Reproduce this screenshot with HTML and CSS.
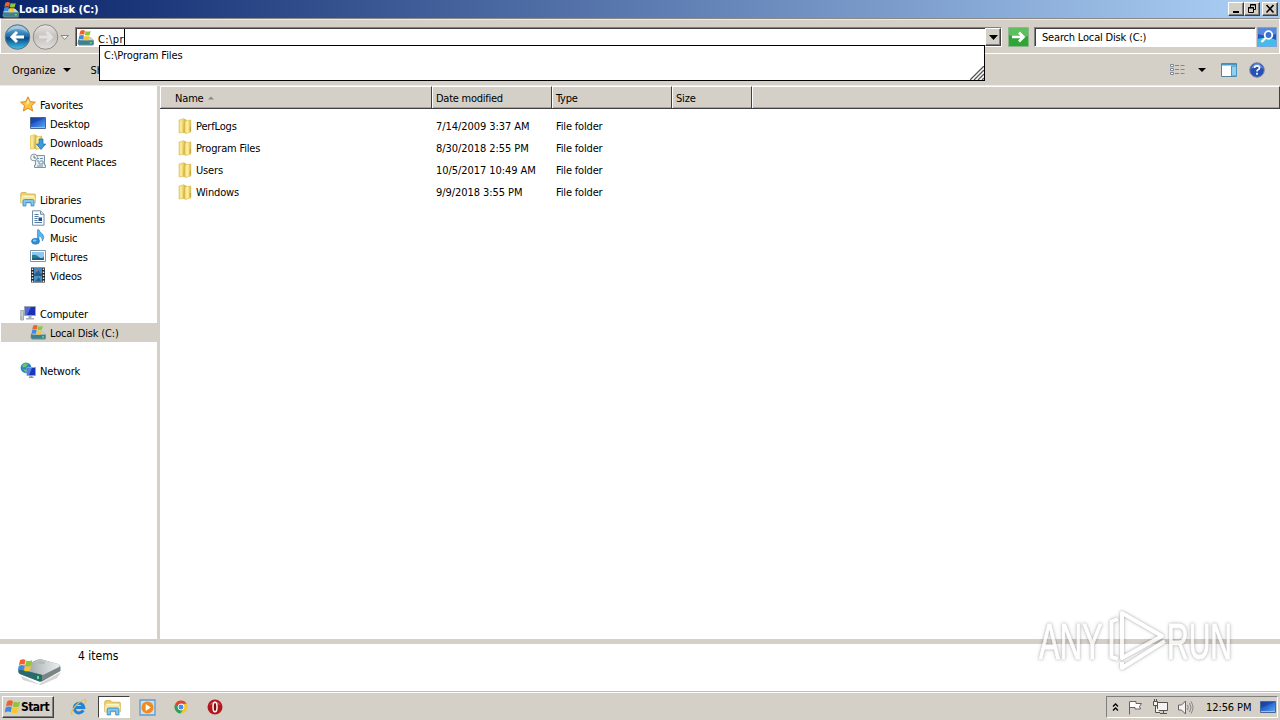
FILE: index.html
```html
<!DOCTYPE html>
<html lang="en">
<head>
<meta charset="utf-8">
<meta name="viewport" content="width=device-width,initial-scale=1">
<title>Local Disk (C:)</title>
<link rel="stylesheet" href="styles.css">
</head>
<body>

<!-- ======= SHARED ICONS ======= -->
<svg class="defs" width="0" height="0">
  <defs>
    <linearGradient id="gFolder" x1="0" x2="1"><stop offset="0" stop-color="#f7e68e"/><stop offset=".5" stop-color="#fff0a0"/><stop offset="1" stop-color="#d4b030"/></linearGradient>
    <linearGradient id="gScreen" x1="0" x2="1" y2="1"><stop offset="0" stop-color="#1747ad"/><stop offset=".5" stop-color="#2f6bd8"/><stop offset="1" stop-color="#5fb2ee"/></linearGradient>
    <linearGradient id="gBack" x2="0" y2="1"><stop offset="0" stop-color="#8fc0dc"/><stop offset=".45" stop-color="#2372ae"/><stop offset=".55" stop-color="#0b4a86"/><stop offset="1" stop-color="#3fc6f0"/></linearGradient>
    <linearGradient id="gGrey" x2="0" y2="1"><stop offset="0" stop-color="#e6e4e1"/><stop offset=".5" stop-color="#c4c1bd"/><stop offset="1" stop-color="#e2e0de"/></linearGradient>
    <linearGradient id="gDrive" x2="1" y2="0"><stop offset="0" stop-color="#8d9596"/><stop offset="1" stop-color="#eef0f0"/></linearGradient>
  </defs>
  <symbol id="flag" viewBox="0 0 12 12">
    <path d="M1.6 1.8Q4 .3 6 1.6L5.2 5.4Q3 4.400 .7 5.700Z" fill="#f0612b"/>
    <path d="M6.600 1.900Q9 3 11.400 1.800L10.500 5.600Q8.200 6.600 5.800 5.600Z" fill="#8cc63f"/>
    <path d="M.6 6.300Q3 5 5.100 6.100L4.300 9.900Q2 8.900-.3 10.200Z" fill="#3b8de0"/>
    <path d="M5.700 6.300Q8 7.400 10.400 6.300L9.500 10.100Q7 11.200 4.900 10.200Z" fill="#fcc62b"/>
  </symbol>
  <symbol id="drive" viewBox="0 0 16 16">
    <path d="M1 10L5 7.500H12.500L15.800 10.500V14.500Q15.800 15.500 14.500 15.500H2L.5 14Z" fill="#6d8e98"/>
    <path d="M1 10L5 7.500H12.500L15.500 10.500H3Z" fill="#c8d3d3"/>
    <path d="M.8 10.700L3 11H15.300V14.500H2Z" fill="#3a8192"/>
    <path d="M12 13h2" stroke="#6fe05a" stroke-width="1.300"/>
    <use href="#flag" x="1.500" y="0" width="12" height="12"/>
  </symbol>
  <symbol id="folder" viewBox="0 0 14 16">
    <path d="M1 2L6 .6V14.500L1 15Z" fill="#f0d871" stroke="#dcc468" stroke-width=".6"/>
    <path d="M6 .8L8.500 1.700V15.400L5 14.600Z" fill="#dcb942"/>
    <path d="M7 3L12.800 2V14L7 15.500Z" fill="url(#gFolder)" stroke="#d8bb58" stroke-width=".6"/>
    <path d="M3 2.500V14" stroke="#fff8cc"/>
    <path d="M12.300 9v4" stroke="#c49e35"/>
  </symbol>
  <symbol id="library" viewBox="0 0 16 16">
    <path d="M.7 3Q.7 1.500 2 1.500H6L7.500 3H14.500Q15.400 3 15.400 4V12H.7Z" fill="#edd06a" stroke="#c9a73d" stroke-width=".7"/>
    <path d="M2 4.500H14.200V9H2Z" fill="#fdf6c8"/>
    <path d="M.8 6H15.300V12.500H.8Z" fill="#f7e699"/>
    <path d="M3 15V10Q3 8.500 4.500 8.500H12.500Q14 8.500 14 10V15H11V11.500H6V15Z" fill="#7fc7ee" stroke="#3389c4" stroke-width=".8"/>
  </symbol>
  <symbol id="screen" viewBox="0 0 16 14">
    <path d="M.5 1.500H15.500V12.500H.5Z" fill="url(#gScreen)" stroke="#4a6794"/>
    <path d="M1 2H15L1 8Z" fill="#0d2f8a" opacity=".4"/>
    <path d="M1 11.500H15" stroke="#8ac6ef"/>
    <path d="M1.500 11.500h2" stroke="#9be257"/>
  </symbol>
</svg>

<!-- ======= TITLE BAR ======= -->
<header class="titlebar">
  <svg class="ico" width="17" height="17"><use href="#drive"/></svg>
  <h1>Local Disk (C:)</h1>
  <div class="win-buttons">
    <button class="raised"><svg width="12" height="10"><path d="M3 8h6" stroke="#000" stroke-width="2"/></svg></button>
    <button class="raised"><svg width="12" height="10" fill="none" stroke="#000"><path d="M4.500 3V.5h5v5H8M4 1h6M2.500 3.500h5v5h-5zM2 4h6"/></svg></button>
    <button class="raised last"><svg width="12" height="10" stroke="#000" stroke-width="1.600"><path d="M2.500 1l7 7.500M9.500 1l-7 7.500"/></svg></button>
  </div>
</header>

<!-- ======= ADDRESS BAR ======= -->
<div class="navbar">
  <svg class="nav-arrows" width="70" height="28" viewBox="0 0 70 28">
    <circle cx="16.500" cy="14" r="12.300" fill="url(#gBack)" stroke="#5c7489"/>
    <path d="M6 10Q16 2 27 10Q25 3 16.500 3Q8 3 6 10Z" fill="#fff" opacity=".35"/>
    <path d="M23 14H11.500M16 9L11 14L16 19" fill="none" stroke="#fff" stroke-width="3"/>
    <circle cx="44.500" cy="14" r="12.300" fill="url(#gGrey)" stroke="#8d8b89"/>
    <path d="M38 14H50M45.500 9L50.500 14L45.500 19" fill="none" stroke="#e4e2e0" stroke-width="3"/>
    <path d="M60 12.500H67.500L63.700 16.500Z" fill="#f5f4f2" stroke="#8b8884"/>
  </svg>
  <div class="address sunken">
    <svg class="ico" width="17" height="17"><use href="#drive"/></svg>
    <span class="typed">C:\pr</span>
    <button class="drop raised"><svg width="9" height="5"><path d="M0 0h9L4.500 5z"/></svg></button>
    <div class="suggest">
      <span>C:\Program Files</span>
      <svg class="grip" width="14" height="14" stroke="#555" stroke-width="1.300"><path d="M0 14L14 0M4 14L14 4M8 14L14 8M12 14l2-2"/></svg>
    </div>
  </div>
  <svg class="go" width="21" height="20" viewBox="0 0 21 20">
    <path d="M.5.5h20v19H.5z" fill="#2fa535" stroke="#8fb690"/>
    <path d="M1 1h19v8Q10 12 1 8z" fill="#7fd07c" opacity=".6"/>
    <path d="M4 10H15M11 5.500L15.500 10L11 14.500" fill="none" stroke="#fff" stroke-width="2.600"/>
  </svg>
  <div class="search sunken">Search Local Disk (C:)</div>
  <svg class="find" width="20" height="20" viewBox="0 0 20 20">
    <path d="M.5.5h19v19H.5z" fill="#2456c2" stroke="#7ba4d8"/>
    <path d="M1 12Q10 9 19 13V19H1z" fill="#42bce8"/>
    <path d="M1 1h18v6Q10 10 1 7z" fill="#6f9ce6" opacity=".7"/>
    <circle cx="11.500" cy="8" r="3.800" fill="#3b70cc" stroke="#fff" stroke-width="1.800"/>
    <path d="M8.500 11L4.500 15" stroke="#fff" stroke-width="2.400"/>
  </svg>
</div>

<!-- ======= COMMAND BAR ======= -->
<div class="commands">
  <span>Organize</span>
  <svg class="caret" width="8" height="4"><path d="M0 0h8L4 4z"/></svg>
  <span class="share">Share with</span>
  <div class="views">
    <svg width="16" height="14" fill="#fff" stroke="#7c8894"><path d="M1.500 1.500h3v2h-3zM1.500 5.500h3v2h-3zM1.500 9.500h3v2h-3zM6 2.500h4M11.500 2.500h4M6 6.500h4M11.500 6.500h4M6 10.500h4M11.500 10.500h4"/></svg>
    <svg class="caret2" width="8" height="4"><path d="M0 0h8L4 4z"/></svg>
    <svg width="17" height="14"><path d="M.5.5h15v13H.5z" fill="#fff" stroke="#54809d"/><path d="M1 1.500h14" stroke="#4796c4" stroke-width="2"/><path d="M10.500 3h5v10h-5z" fill="#8fd0ec" stroke="#4796c4"/></svg>
    <svg class="help" width="16" height="16"><circle cx="8" cy="8" r="7.300" fill="#2550b4" stroke="#7c8ba8"/><path d="M2 7Q8 2 14 7Q12 1.500 8 1.500T2 7z" fill="#86a6e6" opacity=".7"/><path d="M5.500 6Q5.500 3.800 8 3.800T10.500 6Q10.500 7.200 9 7.800Q8 8.300 8 9.500M8 10.800v2" fill="none" stroke="#fff" stroke-width="1.700"/></svg>
  </div>
</div>

<!-- ======= MAIN ======= -->
<main>
  <nav class="tree">
    <div class="node top">
      <svg width="16" height="16"><path d="M8 .8L10.200 5.600L15.400 6.200L11.500 9.700L12.600 14.900L8 12.300L3.400 14.900L4.500 9.700L.6 6.200L5.800 5.600Z" fill="#fcc33c" stroke="#e0852b"/><path d="M8 3L9.500 6.500L6 9z" fill="#fff3b0"/></svg><span>Favorites</span></div>
    <div class="node"><svg width="16" height="16"><use href="#screen" y="1" height="14"/></svg><span>Desktop</span></div>
    <div class="node">
      <svg width="16" height="16"><use href="#folder" x="-1" width="14"/><path d="M9 5h4v5h2.700L11 15.500L6.500 10H9z" fill="#3b9ade" stroke="#2067a8" stroke-width=".7"/></svg><span>Downloads</span></div>
    <div class="node">
      <svg width="16" height="16"><path d="M5.500 2.500H14.500V12H15.500V14.500H4.500V12H5.500Z" fill="#e8f0f5" stroke="#7d94a4"/><path d="M7 5.500h2M10 5.500h3M7 8h2v3h4V8h-3M7 13h6" fill="none" stroke="#6c91ac"/><circle cx="4" cy="4.500" r="3.400" fill="#f6f7f8" stroke="#8996a0"/><path d="M4 2.500V5H6" fill="none" stroke="#657480"/></svg><span>Recent Places</span></div>

    <div class="node top gap"><svg width="16" height="16"><use href="#library"/></svg><span>Libraries</span></div>
    <div class="node">
      <svg width="16" height="16"><path d="M2.500.8H10.500L14 4.300V15.200H2.500Z" fill="#f9fbfd" stroke="#7390ab"/><path d="M10.500 1V4.300H14" fill="#d6e2ee" stroke="#7390ab"/><path d="M4.500 4.500h4M4.500 6.500h4M4.500 8.500h3M4.500 10.500h3M4.500 12.500h7.500" stroke="#527ba4"/><path d="M8.500 7.500h3.500v3.500H8.500z" fill="#244f8e"/></svg><span>Documents</span></div>
    <div class="node">
      <svg width="16" height="16"><path d="M7.500 12V.8H9Q9.500 3.500 12.500 5Q15 8 12.500 12Q12.500 8 9 6.500V12z" fill="#59b4ea" stroke="#2a7fc4" stroke-width=".6"/><ellipse cx="5.500" cy="12.300" rx="4" ry="3" fill="#2f8dd6" stroke="#2674b4" stroke-width=".6"/><ellipse cx="4.700" cy="11.500" rx="1.800" ry="1" fill="#8ed0f4"/></svg><span>Music</span></div>
    <div class="node">
      <svg width="16" height="16"><path d="M.5 2.500H15.500V13.500H.5Z" fill="#fff" stroke="#7d95ab"/><path d="M2 4H14V12H2Z" fill="#8bc9ec"/><path d="M2 7Q6 6 9 9T14 8V12H2Z" fill="#2e7f83"/><path d="M2 10.500Q8 9 14 11V12H2Z" fill="#1c5c93"/></svg><span>Pictures</span></div>
    <div class="node">
      <svg width="16" height="16"><path d="M1 .5H15V15.500H1Z" fill="#20262c"/><path d="M4 1H12V7.500H4Z" fill="#3f87c5"/><path d="M4 8.500H12V15H4Z" fill="#4790c8"/><path d="M5 7L8 3L11 7zM5 14.500L9 10L11 14.500z" fill="#285f92"/><path d="M6 3l2 1M9 11l1-1" stroke="#e36c4a"/><path d="M2.500 1.500V15M13.500 1.500V15" stroke="#e8edf0" stroke-width="1.500" stroke-dasharray="1.500 1.500"/></svg><span>Videos</span></div>

    <div class="node top gap">
      <svg width="16" height="16"><path d="M.7 5.500H3.500V15H.7Z" fill="#c9d0d4" stroke="#8a949b" stroke-width=".7"/><path d="M1.300 11.500v2" stroke="#78c94e"/><path d="M4.500 1.500H15.500V10.500H4.500Z" fill="#1b30b5" stroke="#9ba6bb"/><path d="M5 2H11L7 10H5z" fill="#6583e2" opacity=".7"/><path d="M8.500 11h3v2H14v1.500H6V13H8.500Z" fill="#a6afb7"/></svg><span>Computer</span></div>
    <div class="node selected"><svg width="16" height="16"><use href="#drive"/></svg><span>Local Disk (C:)</span></div>

    <div class="node top gap">
      <svg width="16" height="16"><circle cx="6" cy="5.800" r="5.400" fill="#2b86c8"/><path d="M2 3Q5 0 8 2L6 5L3 5.500zM3 7l4 1-1 3z" fill="#6cc65b"/><path d="M7 5.500H15.500V13.500H7Z" fill="#1b38bb" stroke="#8fa6c8"/><path d="M7.500 6H12L9 13H7.500z" fill="#5b80e4"/><path d="M9 15.300H13.500M11.200 13.500v2" stroke="#8c98a5" stroke-width="1.400"/></svg><span>Network</span></div>
  </nav>

  <section class="files">
    <div class="row head">
      <span class="c-name">Name <svg width="6" height="4"><path d="M0 3.500L3 .5L6 3.500z" fill="#8c8984"/></svg></span>
      <span class="c-date">Date modified</span><span class="c-type">Type</span><span class="c-size">Size</span><span class="c-rest"></span>
    </div>
    <div class="list">
      <div class="row"><span class="c-name"><svg width="14" height="16"><use href="#folder"/></svg>PerfLogs</span><span class="c-date">7/14/2009 3:37 AM</span><span class="c-type">File folder</span></div>
      <div class="row"><span class="c-name"><svg width="14" height="16"><use href="#folder"/></svg>Program Files</span><span class="c-date">8/30/2018 2:55 PM</span><span class="c-type">File folder</span></div>
      <div class="row"><span class="c-name"><svg width="14" height="16"><use href="#folder"/></svg>Users</span><span class="c-date">10/5/2017 10:49 AM</span><span class="c-type">File folder</span></div>
      <div class="row"><span class="c-name"><svg width="14" height="16"><use href="#folder"/></svg>Windows</span><span class="c-date">9/9/2018 3:55 PM</span><span class="c-type">File folder</span></div>
    </div>
  </section>
</main>

<!-- ======= DETAILS PANE ======= -->
<footer class="details">
  <svg width="46" height="30" viewBox="0 0 46 30">
    <path d="M4 21L22 29L44 17L40 23L24 30L6 25Z" fill="#b8b8b8" opacity=".6"/>
    <path d="M2 13L20 5Q22 4 25 4.500L41 9Q43.500 10 43.500 12V16L26 26Q24 27 21 26L3 19Q1 18 1 16Z" fill="#7b8585"/>
    <path d="M2 13L20 5Q22 4 25 4.500L41 9Q44 10.500 42 12L26 20L2 14Z" fill="url(#gDrive)"/>
    <path d="M2 14L25 20V26Q23 27 21 26L3 19Q1 18 2 14Z" fill="#276b70"/>
    <path d="M21 21v3" stroke="#5fe27a" stroke-width="2"/>
    <ellipse cx="24" cy="7.500" rx="4" ry="1.500" fill="#b4b9b9"/>
    <use href="#flag" x="1" y="3" width="15" height="15"/>
  </svg>
  <span>4 items</span>
</footer>

<!-- ======= TASKBAR ======= -->
<div class="taskbar">
  <button class="start raised"><svg width="16" height="16"><use href="#flag" x="0" y="0" width="16" height="16"/></svg><span>Start</span></button>
  <div class="quick">
    <span class="task"><svg width="18" height="18"><path d="M13.300 12.300A4.800 4.800 0 1 1 13.800 9.500H5" fill="none" stroke="#2583d4" stroke-width="3"/><path d="M2.500 16.500Q-.5 16.500 4 10T15 1.500Q17.300 2 14.500 6" fill="none" stroke="#e9c04c" stroke-width="1.300"/></svg></span>
    <span class="task active"><svg width="17" height="17"><use href="#library"/></svg></span>
    <span class="task"><svg width="17" height="17"><path d="M1 1h15v15H1z" fill="#c9e0f4" stroke="#5e9bd2" stroke-width="1.300"/><circle cx="8.500" cy="8.500" r="6" fill="#f28a1c"/><path d="M6.700 5L11.800 8.500L6.700 12z" fill="#fff"/></svg></span>
    <span class="task"><svg width="14" height="14"><circle cx="7" cy="7" r="6.500" fill="#f7c52d"/><path d="M1.300 3.800A6.500 6.500 0 0 1 12.700 3.800H7L4 9z" fill="#dc4437"/><path d="M1.300 3.800A6.500 6.500 0 0 0 6.500 13.500L9.500 8.500L4.500 8.500z" fill="#2ca05a"/><circle cx="7" cy="7" r="3" fill="#4a8af4" stroke="#fff" stroke-width="1"/></svg></span>
    <span class="task"><svg width="16" height="16"><circle cx="8" cy="8" r="7.500" fill="#b3161c"/><path d="M2 6Q8-1 14 6Q8 4 2 6z" fill="#e0686a" opacity=".8"/><ellipse cx="8" cy="8" rx="2" ry="4.800" fill="#7f0b10" stroke="#fff" stroke-width="1.500"/></svg></span>
  </div>
  <div class="tray">
    <svg width="7" height="9" fill="none" stroke="#000" stroke-width="1.300"><path d="M1 3.500L3.500 1L6 3.500M1 7.500L3.500 5L6 7.500"/></svg>
    <svg width="17" height="15" fill="#fff" stroke="#66635f"><path d="M2.500 14.500V1.500M3 1.500h6v2h5.500l-2 3l1 2.500H8V7.500H3"/></svg>
    <svg width="17" height="16" fill="#f4f3f1" stroke="#55524e"><path d="M5.500 3.500h10v8h-10zM8 14.500h7M11.500 12v2"/><path d="M1.500 2.500h4v4h-4zM2.500 0v2M4.500 0v2M3.500 7v6.500H8" /></svg>
    <svg width="17" height="15" fill="#f4f3f1" stroke="#66635f"><path d="M1.500 5h3L8.500 1v13l-4-4h-3z"/><path d="M10.500 5q1.500 2.500 0 5M12.500 3q3 4.500 0 9M14 1.500q4 6 0 12" fill="none" stroke="#86837f"/></svg>
    <time>12:56 PM</time>
    <svg width="16" height="14"><use href="#screen"/></svg>
  </div>
</div>

<!-- watermark, floats over the details pane -->
<svg class="mark" width="240" height="76" viewBox="0 0 240 76">
  <text transform="translate(5 55) scale(.62 1)">ANY</text>
  <path d="M84 15L77.500 17.500V53L84 55M88 9L128 32L88 54ZM131 37L88 64V58"/>
  <text transform="translate(133 55) scale(.6 1)">RUN</text>
</svg>

</body>
</html>
```

FILE: styles.css
```css
/* ---------- PALETTE ---------- */
:root{
  --face:#d4d0c8;
  --light:#ffffff;
  --shade:#808080;
  --dark:#404040;
}

/* ---------- RESET ---------- */
*{margin:0;padding:0;box-sizing:border-box;}
body{width:1280px;height:720px;overflow:hidden;display:flex;flex-direction:column;background:var(--face);color:#000;
  font:11px/14px Tahoma,"DejaVu Sans Condensed","DejaVu Sans",sans-serif;font-stretch:condensed;letter-spacing:-.17px;white-space:nowrap;}
svg{display:block;flex:none;}
.defs{position:absolute;}
button{font:inherit;letter-spacing:inherit;background:var(--face);display:flex;align-items:center;justify-content:center;}
.raised{border:1px solid;border-color:var(--light) var(--dark) var(--dark) var(--light);box-shadow:inset -1px -1px var(--shade);}
.sunken{background:#fff;border:1px solid;border-color:var(--shade) var(--light) var(--light) var(--shade);box-shadow:inset 1px 1px var(--dark);}

/* ---------- TITLE BAR ---------- */
.titlebar{height:18px;display:flex;align-items:center;padding:0 2px;background:linear-gradient(90deg,#0a246a,#a6caf0 1228px);}
.titlebar h1{font-size:11px;font-weight:bold;color:#fff;padding-top:1px;letter-spacing:-.05px;}
.win-buttons{display:flex;margin-left:auto;}
.win-buttons button{width:16px;height:14px;}
.win-buttons .last{margin-left:2px;}

/* ---------- ADDRESS BAR ---------- */
.navbar{height:36px;display:flex;align-items:center;border:1px solid;border-color:#8b8985 var(--light) var(--light);
  box-shadow:inset 0 1px #eceae6;padding:2px 1px 0 0;}
.nav-arrows{margin-right:4px;}
.address{position:relative;width:927px;height:20px;display:flex;align-items:center;padding-left:1px;}
.typed{margin-left:4px;padding-top:4px;border-right:1px solid #000;line-height:13px;letter-spacing:.4px;}
.drop{width:16px;height:18px;margin-left:auto;}
.suggest{position:absolute;left:23px;top:17px;width:886px;height:36px;background:#fff;border:1px solid #000;padding:3px 4px;z-index:5;letter-spacing:-.1px;}
.grip{position:absolute;right:0;bottom:0;}
.go{margin-left:6px;}
.search{width:222px;height:20px;margin-left:5px;padding:3px 7px;letter-spacing:-.18px;}
.find{margin-left:1px;}

/* ---------- COMMAND BAR ---------- */
.commands{height:32px;display:flex;align-items:center;padding-left:12px;border-bottom:1px solid #eceae6;}
.commands span{padding-top:2px;letter-spacing:-.1px;}
.caret{margin:0 20px 0 7px;}
.views{display:flex;align-items:center;margin-left:auto;padding-right:15px;}
.caret2{margin:0 15px 0 13px;}
.help{margin-left:11px;}

/* ---------- MAIN ---------- */
main{height:553px;display:flex;}
.tree{width:160px;background:#fff;border-right:3px solid var(--face);padding-top:9px;}
.node{height:19px;display:flex;align-items:center;gap:4px;padding-left:30px;}
.node svg{margin-top:-2px;}
.node span{padding-top:2px;}
.node.top{padding-left:20px;}
.node.gap{margin-top:19px;}
.node.selected{background:var(--face);margin-left:1px;padding-left:29px;}
.files{flex:1;background:#fff;}
.row{display:flex;height:22px;align-items:center;}
.row span{display:flex;align-items:center;flex:none;}
.c-name{width:272px;padding-left:18px;gap:4px;}
.c-date,.c-type{width:120px;padding-left:4px;}
.c-size{width:80px;padding-left:4px;}
.list{padding-top:7px;}
.list svg{margin-top:-2px;}
.list .c-date{letter-spacing:-.06px;}
.head{height:23px;background:var(--face);align-items:stretch;border-bottom:1px solid var(--dark);box-shadow:inset 0 -1px #a5a29c;}
.head span{border-left:1px solid var(--light);border-right:1px solid var(--dark);border-top:1px solid var(--light);padding:2px 0 0 3px;}
.head svg{margin-top:-2px;}
.head .c-date,.head .c-type{letter-spacing:-.25px;}
.head .c-name{padding-left:14px;}
.row .c-rest{flex:1;}

/* ---------- DETAILS PANE ---------- */
.details{height:53px;background:#fff;border-top:5px solid var(--face);display:flex;padding:5px 0 0 17px;font-size:12px;}
.details svg{margin-top:6px;}
.details span{margin-left:15px;letter-spacing:0;}

/* ---------- TASKBAR ---------- */
.taskbar{height:28px;display:flex;align-items:center;padding:1px 2px 0 2px;border-top:1px solid var(--light);box-shadow:0 -1px #c4c0b8;}
.start{width:52px;height:22px;font-weight:bold;font-size:12px;letter-spacing:-.5px;padding-right:2px;}
.quick{display:flex;margin-left:10px;gap:2px;}
.task{width:32px;height:22px;display:flex;align-items:center;justify-content:center;padding-right:2px;}
.active{padding-right:0;background:#fff;border:1px solid;border-color:var(--dark) var(--light) var(--light) var(--dark);}
.active svg{margin-left:-3px;}
.tray{display:flex;align-items:center;gap:8px;height:22px;width:172px;margin-left:auto;padding-left:5px;border:1px solid;border-color:var(--shade) var(--light) var(--light) var(--shade);}
.tray time{margin:1px 1px 0 4px;letter-spacing:-.1px;}

/* ---------- WATERMARK ---------- */
.mark{position:absolute;left:1034px;top:604px;filter:drop-shadow(0 0 1px rgba(0,0,0,.35)) drop-shadow(0 0 2px rgba(0,0,0,.2));opacity:.75;}
.mark text{font:50px "Liberation Sans",sans-serif;letter-spacing:0;fill:#fff;stroke:#fff;}
.mark path{fill:none;stroke:#fff;stroke-width:4;stroke-linejoin:round;}
```
